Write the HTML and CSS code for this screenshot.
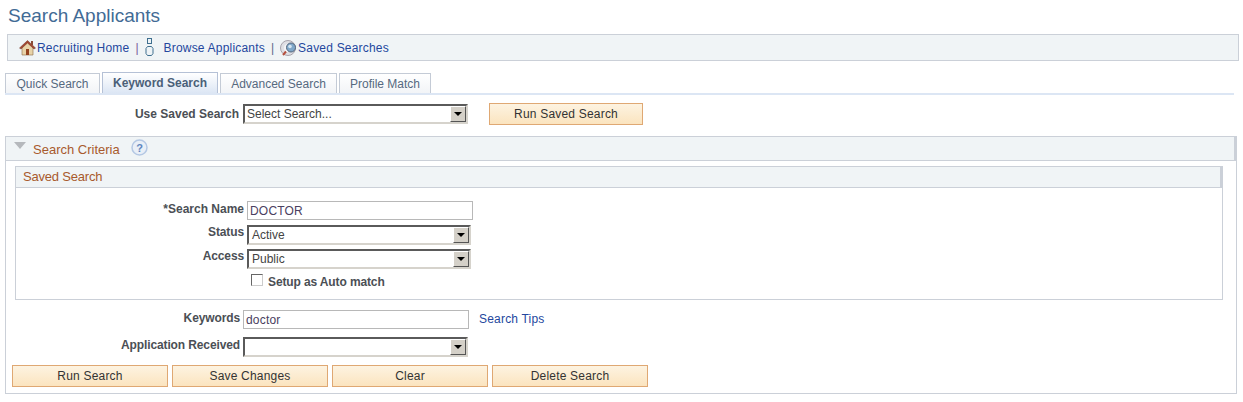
FILE: index.html
```html
<!DOCTYPE html>
<html lang="en">
<head>
<meta charset="utf-8">
<title>Search Applicants</title>
<link rel="stylesheet" href="styles.css">
</head>
<body>
<h1 class="title">Search Applicants</h1>
<nav class="toolbar">
  <svg class="ico-home" width="17" height="17" viewBox="0 0 17 17"><path d="M3 8v8h11V8L8.500 3z" fill="#e8d3a8" stroke="#8a6a45" stroke-width=".6"/><path d="M.5 9 8.500 1.500 16.500 9 15 10 8.500 4 2 10z" fill="#a5452f" stroke="#6d3a28" stroke-width=".5"/><rect x="12" y="2" width="2" height="4" fill="#8a4a35"/><rect x="7" y="10" width="3" height="6" fill="#94431f"/></svg>
  <a class="link" href="#">Recruiting Home</a>
  <span class="sep sep-a">|</span>
  <svg class="ico-person" width="10" height="19" viewBox="0 0 10 19"><rect x="2.500" y=".5" width="4" height="5" fill="#eef3f6" stroke="#3f6f8f"/><path d="M2.500 8.500h4l1.500 2v5l-1.500 2h-4l-1.500-2v-5z" fill="#eef3f6" stroke="#3f6f8f"/></svg>
  <a class="link link-b" href="#">Browse Applicants</a>
  <span class="sep sep-b">|</span>
  <svg class="ico-disc" width="18" height="18" viewBox="0 0 18 18"><circle cx="8" cy="9" r="7.500" fill="#dfdfe4" stroke="#a8a4ac"/><circle cx="8" cy="9" r="4" fill="#f5f5f7"/><path d="M6 12.500 3 16" stroke="#b5503f" stroke-width="2"/><circle cx="11" cy="8.500" r="4.500" fill="#7fa7c9" stroke="#55677d"/><circle cx="10" cy="7.500" r="1.800" fill="#d5e5f2"/></svg>
  <a class="link" href="#">Saved Searches</a>
</nav>
<div class="tabs">
  <a class="tab tab-1" href="#">Quick Search</a>
  <a class="tab tab-2 active" href="#">Keyword Search</a>
  <a class="tab tab-3" href="#">Advanced Search</a>
  <a class="tab tab-4" href="#">Profile Match</a>
</div>
<div class="saved-row">
  <span class="label label-use">Use Saved Search</span>
  <div class="select select-use"><span class="select-text">Select Search...</span><span class="arrow"></span></div>
  <button class="btn btn-run-saved" type="button">Run Saved Search</button>
</div>
<section class="panel">
  <header class="panel-head">
    <span class="tri"></span>
    <span class="panel-title">Search Criteria</span>
    <svg class="help" width="17" height="17" viewBox="0 0 17 17"><circle cx="8.500" cy="8.500" r="7.500" fill="#e9eff7" stroke="#b5c8e4" stroke-width="1.500"/><text x="8.500" y="12.500" text-anchor="middle" class="help-q">?</text></svg>
  </header>
  <section class="inner">
    <header class="inner-head">Saved Search</header>
    <div class="inner-body">
      <div class="row row-name">
        <span class="label label-f label-name">*Search Name</span>
        <div class="input input-name">DOCTOR</div>
      </div>
      <div class="row row-status">
        <span class="label label-f">Status</span>
        <div class="select select-f"><span class="select-text">Active</span><span class="arrow"></span></div>
      </div>
      <div class="row row-access">
        <span class="label label-f">Access</span>
        <div class="select select-f"><span class="select-text">Public</span><span class="arrow"></span></div>
      </div>
      <label class="check-row"><span class="check"></span><span class="label">Setup as Auto match</span></label>
    </div>
  </section>
  <div class="row row-keywords">
    <span class="label label-k">Keywords</span>
    <div class="input input-k">doctor</div>
    <a class="link tips" href="#">Search Tips</a>
  </div>
  <div class="row row-app">
    <span class="label label-k">Application Received</span>
    <div class="select select-app"><span class="arrow"></span></div>
  </div>
  <div class="actions">
    <button class="btn" type="button">Run Search</button>
    <button class="btn" type="button">Save Changes</button>
    <button class="btn" type="button">Clear</button>
    <button class="btn" type="button">Delete Search</button>
  </div>
</section>
</body>
</html>
```
FILE: styles.css
```css
* { box-sizing: border-box; }
html, body { margin: 0; padding: 0; background: #fff; }
body { width: 1243px; height: 402px; overflow: hidden; font-family: "Liberation Sans", Arial, sans-serif; font-size: 12px; color: #333; }
.title { margin: 0; padding: 6px 0 0 8px; height: 34px; font-size: 19px; font-weight: 400; line-height: 20px; color: #426b95; }
.toolbar { margin-left: 7px; width: 1232px; height: 27px; background: #f0f4f6; border: 1px solid #cbd0d8; display: flex; align-items: center; padding-left: 11px; }
.link { color: #24479e; text-decoration: none; font-size: 12px; letter-spacing: .2px; }
.sep { color: #7a5a9a; }
.sep-a { margin: 0 6px; }
.sep-b { margin: 0 6px; color: #5a6a8a; }
.ico-home { flex: none; margin-right: 1px; }
.ico-person { flex: none; margin-right: 9px; }
.ico-disc { flex: none; }
.tabs { margin: 12px 0 0 5px; width: 1229px; height: 22px; display: flex; gap: 2px; border-bottom: 2px solid #dce6f4; align-items: flex-end; }
.tab { height: 20px; border: 1px solid #c4cbd6; border-bottom: 0; background: linear-gradient(#fff, #f2f4f7); color: #56697f; text-decoration: none; display: flex; align-items: center; justify-content: center; font-size: 12px; }
.tab-1 { width: 95px; }
.tab-2 { width: 116px; height: 21px; border-color: #b5c1d6; background: linear-gradient(#fff, #dce6f4); font-weight: 700; color: #4a5f78; }
.tab-3 { width: 117px; }
.tab-4 { width: 92px; }
.label { font-weight: 700; color: #4b4f55; font-size: 12px; letter-spacing: -.12px; }
.label-use, .label-name { letter-spacing: 0; }
.saved-row { display: flex; align-items: center; height: 21px; margin-top: 8px; }
.label-use { width: 239px; margin-right: 1px; text-align: right; }
.select { position: relative; height: 20px; background: #fff; border: 2px solid; border-color: #5a5a5a #d6d3cc #d6d3cc #5a5a5a; display: flex; align-items: center; color: #444; }
.select-text { padding-left: 2px; }
.arrow { position: absolute; right: 0; top: 0; width: 16px; height: 16px; background: #d4d0c8; border: 1px solid; border-color: #fff #555 #555 #fff; }
.arrow::after { content: ""; position: absolute; left: 3px; top: 5px; border: 4px solid transparent; border-top: 4px solid #000; border-bottom: 0; }
.select-use { width: 225px; margin-left: 3px; }
.btn { width: 156px; height: 22px; border: 1px solid #dfa873; background: linear-gradient(#fdf3e1, #fbe4bf); font-family: "Liberation Sans", Arial, sans-serif; font-size: 12px; color: #333; letter-spacing: .2px; padding: 0; }
.btn-run-saved { width: 154px; margin-left: 21px; }
.panel { margin: 12px 0 0 5px; width: 1232px; height: 258px; border: 1px solid #cbd0d8; }
.panel-head { height: 24px; background: #f0f4f6; border-bottom: 1px solid #cbd0d8; border-right: 2px solid #cbd0d8; display: flex; align-items: center; position: relative; }
.tri { margin: -6px 0 0 8px; border: 6.500px solid transparent; border-top: 7px solid #b5b8bc; border-bottom: 0; }
.panel-title { margin: 2px 0 0 7px; color: #a85a2d; font-size: 13px; }
.help { margin-left: 11px; margin-top: -3px; }
.help-q { font: 700 11px "Liberation Sans", Arial, sans-serif; fill: #5f86c0; }
.inner { margin: 5px 0 0 9px; width: 1208px; height: 134px; border: 1px solid #cbd0d8; }
.inner-head { height: 21px; background: #f0f4f6; border-bottom: 1px solid #cbd0d8; border-right: 2px solid #cbd0d8; padding-left: 7px; line-height: 20px; color: #a85a2d; font-size: 13px; letter-spacing: -.2px; }
.inner-body { padding-top: 12px; }
.row { display: flex; align-items: flex-start; }
.label-f { width: 228px; text-align: right; line-height: 15px; }
.label-name { margin-top: 2px; }
.input { height: 19px; border: 1px solid #b8b8b8; background: #fff; color: #4a4060; line-height: 18px; padding-left: 2px; }
.input-name { width: 226px; margin-left: 3px; margin-top: 1px; }
.row-status { margin-top: 5px; height: 21px; }
.row-access { margin-top: 3px; height: 21px; }
.select-f { width: 224px; margin-left: 3px; }
.select-f .select-text { padding-left: 3px; }
.check-row { display: flex; align-items: center; margin: 4px 0 0 235px; height: 16px; }
.check { width: 12px; height: 12px; border: 1px solid; border-color: #666 #ccc #ccc #666; background: #fff; margin-right: 5px; margin-top: -4px; }
.row-keywords { margin-top: 10px; height: 20px; }
.label-k { width: 234px; margin-top: 1px; text-align: right; line-height: 15px; }
.input-k { width: 226px; margin-left: 3px; }
.input-name, .input-k { letter-spacing: .2px; }
.tips { margin-left: 10px; line-height: 18px; }
.row-app { margin-top: 7px; height: 20px; }
.select-app { width: 225px; margin-left: 3px; }
.actions { display: flex; gap: 4px; margin: 8px 0 0 6px; }
```
